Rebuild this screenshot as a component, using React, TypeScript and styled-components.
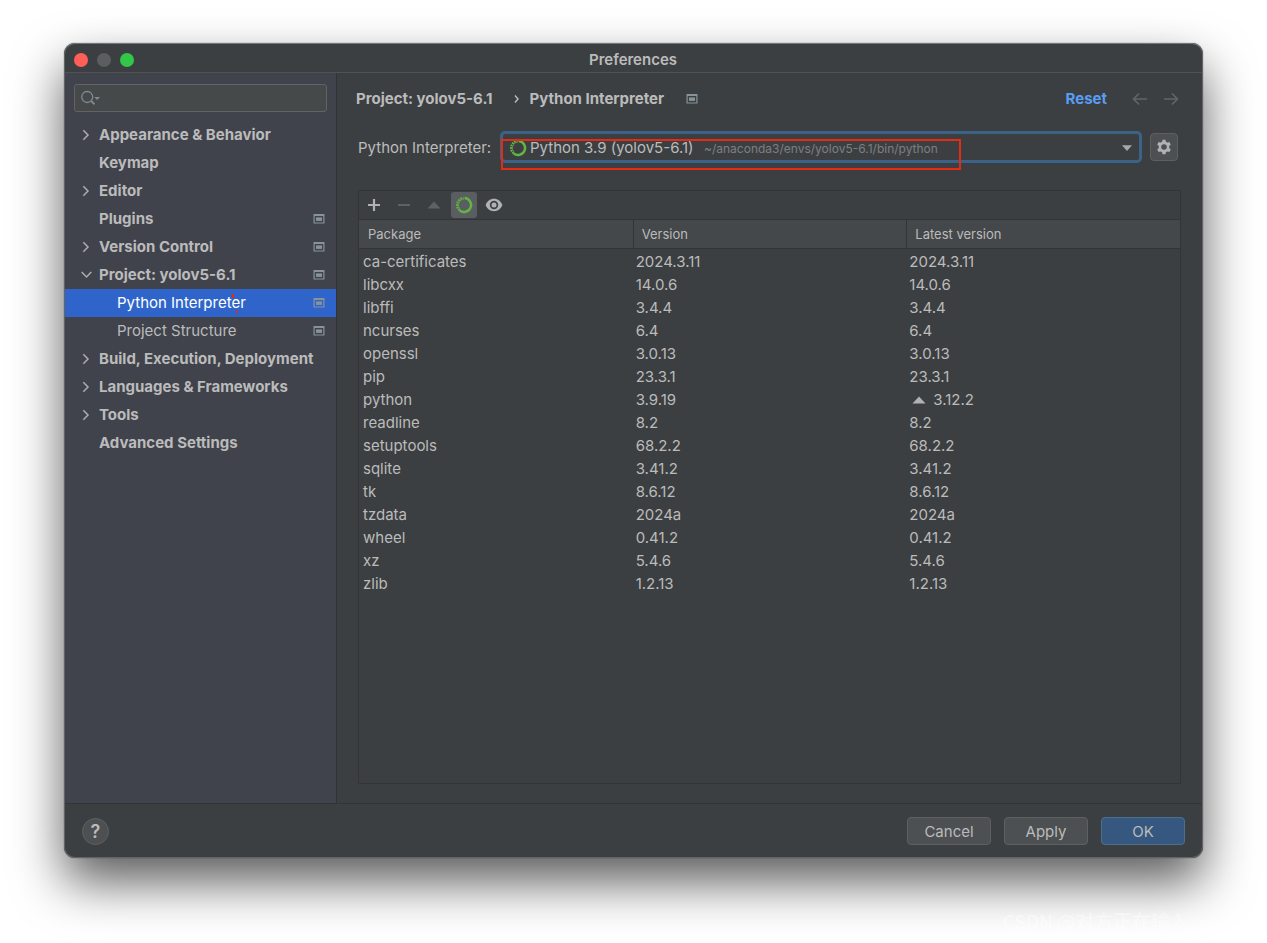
import React from "react";
import styled, { createGlobalStyle, css } from "styled-components";

const GlobalStyle = createGlobalStyle`
  * { box-sizing: border-box; }
  body {
    margin: 0;
    background: #ffffff;
    color: #bbbbbb;
    font-family: Inter, "Liberation Sans", sans-serif;
    font-optical-sizing: none;
    font-size: 15px;
    line-height: 20px;
  }
  button, input, select { font: inherit; color: inherit; }
`;

const Page = styled.div`
  position: relative;
  min-height: 100vh;
  padding: 43px 64px 85px 64px;
  display: flex;
  overflow: hidden;
`;

const Dialog = styled.div`
  flex: 1;
  min-width: 0;
  display: flex;
  flex-direction: column;
  background: #3c3f41;
  border: 1px solid #626465;
  border-top-color: #757777;
  border-radius: 11px;
  overflow: hidden;
  box-shadow: 0 0 1px 0 rgba(0, 0, 0, 0.8), 0 24px 50px 0 rgba(0, 0, 0, 0.64);
`;

const TitleBar = styled.header`
  display: grid;
  grid-template-columns: 1fr auto 1fr;
  align-items: center;
  height: 29px;
  padding: 4px 10px 0 9px;
  border-bottom: 1px solid #505354;
`;

const Lights = styled.div`
  display: flex;
  gap: 9px;
`;

const Light = styled.button<{ $color: string }>`
  width: 14px;
  height: 14px;
  padding: 0;
  border: 0;
  border-radius: 50%;
  background: ${(p) => p.$color};
`;

const Title = styled.h1`
  margin: 0;
  font-size: 15px;
  line-height: 20px;
  font-weight: 600;
`;

const Body = styled.div`
  flex: 1;
  display: flex;
  min-height: 0;
`;

const Sidebar = styled.aside`
  flex: none;
  width: 272px;
  background: #40434c;
  border-right: 1px solid #323335;
`;

const SearchBox = styled.label`
  display: flex;
  align-items: center;
  height: 28px;
  margin: 11px 9px 9px 9px;
  padding: 0 6px;
  background: #45494a;
  border: 1px solid #616365;
  border-radius: 3px;
`;

const SearchInput = styled.input`
  flex: 1;
  min-width: 0;
  border: 0;
  outline: 0;
  padding: 0 4px;
  background: transparent;
`;

const Tree = styled.ul`
  list-style: none;
  margin: 0;
  padding: 0;
`;

const TreeRow = styled.button<{ $child?: boolean; $selected?: boolean }>`
  display: flex;
  align-items: center;
  width: 100%;
  height: 28px;
  padding: 0 11px 0 ${(p) => (p.$child ? 34 : 16)}px;
  border: 0;
  background: transparent;
  text-align: left;
  white-space: nowrap;
  font-weight: ${(p) => (p.$child ? 400 : 700)};
  ${(p) =>
    p.$selected &&
    css`
      background: #2f65ca;
      color: #ffffff;
    `}
`;

const ArrowSlot = styled.span`
  display: flex;
  flex: none;
  width: 18px;
`;

const TreeText = styled.span`
  position: relative;
  flex: 1;
`;

const RedSpecks = styled.svg`
  position: absolute;
  top: 1px;
  left: 114px;
`;

const Main = styled.main`
  flex: 1;
  min-width: 0;
  display: flex;
  flex-direction: column;
  padding: 0 21px 19px 21px;
`;

const Crumbs = styled.div`
  display: flex;
  align-items: center;
  height: 52px;
  margin-left: -2px;
  font-weight: 700;
  white-space: nowrap;
`;

const CrumbArrow = styled.span`
  display: flex;
  margin: 0 10px 0 21px;
`;

const CrumbIcon = styled.span`
  display: flex;
  margin-left: 22px;
`;

const CrumbActions = styled.div`
  display: flex;
  align-items: center;
  gap: 15px;
  margin-left: auto;
  margin-right: 2px;
`;

const ResetLink = styled.a`
  margin-right: 10px;
  color: #589df6;
  text-decoration: none;
`;

const NavButton = styled.button`
  display: flex;
  padding: 0;
  border: 0;
  background: transparent;
`;

const FieldRow = styled.div`
  display: flex;
  align-items: center;
  height: 32px;
  margin: 6px 3px 27px 0;
`;

const FieldLabel = styled.label`
  flex: none;
  width: 142px;
  padding-top: 2px;
  white-space: nowrap;
`;

const Combo = styled.div`
  position: relative;
  flex: 1;
  min-width: 0;
  display: flex;
  align-items: center;
  height: 32px;
  padding: 1px 6px 0 6px;
  border: 3px solid #3d6288;
  border-radius: 5px;
  white-space: nowrap;
`;

const ComboSelect = styled.select`
  appearance: none;
  margin: 0 10px 0 3px;
  padding: 0;
  border: 0;
  outline: 0;
  background: transparent;
`;

const ComboPath = styled.span`
  flex: 1;
  padding-top: 2px;
  color: #7c7f80;
  font-size: 12px;
`;

const Highlight = styled.div`
  position: absolute;
  top: 5px;
  left: -2px;
  width: 460px;
  height: 31px;
  border: 2px solid #e62b14;
  pointer-events: none;
`;

const GearButton = styled.button`
  display: flex;
  align-items: center;
  justify-content: center;
  width: 28px;
  height: 28px;
  margin-left: 8px;
  padding: 0;
  background: #4c5052;
  border: 1px solid #5e6060;
  border-radius: 4px;
`;

const Packages = styled.section`
  flex: 1;
  border: 1px solid #323435;
`;

const Toolbar = styled.div`
  display: flex;
  align-items: center;
  gap: 4px;
  height: 28px;
  padding-left: 2px;
`;

const ToolButton = styled.button<{ $active?: boolean }>`
  display: flex;
  align-items: center;
  justify-content: center;
  width: 26px;
  height: 26px;
  padding: 0;
  border: 0;
  border-radius: 3px;
  background: ${(p) => (p.$active ? "#5a5e60" : "transparent")};
`;

const Table = styled.table`
  width: 100%;
  table-layout: fixed;
  border-collapse: separate;
  border-spacing: 0;
`;

const HeadCell = styled.th`
  height: 30px;
  padding: 0 0 0 9px;
  background: #45484a;
  border-top: 1px solid #323435;
  border-bottom: 1px solid #323435;
  font-size: 13px;
  font-weight: 400;
  text-align: left;
  & + & {
    border-left: 1px solid #323435;
    padding-left: 8px;
  }
`;

const Cell = styled.td`
  height: 23px;
  padding: 0 0 0 4px;
  line-height: 23px;
  & + & {
    padding-left: 3px;
  }
`;

const TableBody = styled.tbody`
  &::before {
    content: "";
    display: table-row;
    height: 1px;
  }
`;

const Upgrade = styled.span`
  display: flex;
  align-items: center;
  gap: 7px;
  padding-left: 3px;
`;

const Footer = styled.footer`
  display: flex;
  align-items: center;
  gap: 13px;
  height: 54px;
  padding: 1px 17px 0 17px;
  border-top: 1px solid #323435;
`;

const HelpButton = styled.button`
  width: 27px;
  height: 27px;
  margin-right: auto;
  padding: 1px 0 0 0;
  border: 1px solid #5e6060;
  border-radius: 50%;
  background: #4c5052;
  font-size: 18px;
  font-weight: 600;
`;

const PushButton = styled.button<{ $primary?: boolean }>`
  width: 84px;
  height: 28px;
  padding: 1px 0 0 0;
  border: 1px solid ${(p) => (p.$primary ? "#4c708c" : "#5e6060")};
  border-radius: 4px;
  background: ${(p) => (p.$primary ? "#365880" : "#4c5052")};
`;

const Watermark = styled.div`
  position: absolute;
  right: 78px;
  bottom: 10px;
  color: rgba(255, 255, 255, 0.5);
  font-family: "Noto Sans CJK SC", sans-serif;
  font-size: 19px;
  line-height: 24px;
  pointer-events: none;
`;

const SearchIcon = () => (
  <svg width="20" height="16" viewBox="0 0 20 16" fill="none" stroke="#7f8b91" strokeWidth="1.3">
    <circle cx="6.2" cy="7" r="5.5" />
    <path d="M10.2 11L13.5 14.3" strokeWidth="1.8" />
    <path d="M13.2 7H19L16.1 10Z" fill="#7f8b91" stroke="none" />
  </svg>
);

const ChevronRight = () => (
  <svg width="10" height="12" viewBox="0 0 10 12" fill="none" stroke="#adadad" strokeWidth="1.5">
    <path d="M2.3 1.3L7 6L2.3 10.7" />
  </svg>
);

const ChevronDown = () => (
  <svg width="12" height="12" viewBox="0 0 12 12" fill="none" stroke="#adadad" strokeWidth="1.5">
    <path d="M0.7 3L5.5 8L10.3 3" />
  </svg>
);

const ProjectIcon = () => (
  <svg width="12" height="10" viewBox="0 0 12 10" fill="#87939a">
    <path fillRule="evenodd" d="M0.5 0H11.5V9.5H0.5ZM1.7 2V8.4H10.3V2Z" />
    <rect x="3" y="3.4" width="6" height="3.5" />
  </svg>
);

const CondaIcon = () => (
  <svg width="18" height="18" viewBox="0 0 18 18" fill="none" stroke="#62b543">
    <path d="M9.6 2A7 7 0 1 1 4.6 14.4" strokeWidth="2.5" />
    <path d="M4.6 14.4A7 7 0 0 1 8.6 2" strokeWidth="2.1" strokeDasharray="1.7 0.9" />
    <path d="M5.2 13.4A6.1 6.1 0 0 1 8.8 3" strokeWidth="0.7" />
  </svg>
);

const GearIcon = () => (
  <svg width="16" height="16" viewBox="0 0 16 16" fill="#afb1b3">
    <path
      fillRule="evenodd"
      d="M6.5 0.7H9.5L9.9 2.8L11.3 3.6L13.3 2.9L14.8 5.5L13.2 6.9V9.1L14.8 10.5L13.3 13.1L11.3 12.4L9.9 13.2L9.5 15.3H6.5L6.1 13.2L4.7 12.4L2.7 13.1L1.2 10.5L2.8 9.1V6.9L1.2 5.5L2.7 2.9L4.7 3.6L6.1 2.8ZM8 5.2A2.8 2.8 0 1 0 8 10.8A2.8 2.8 0 1 0 8 5.2Z"
    />
  </svg>
);

const EyeIcon = () => (
  <svg width="18" height="14" viewBox="0 0 18 14">
    <path
      fill="#afb1b3"
      fillRule="evenodd"
      d="M9 0.8C13 0.8 16.1 3.4 17.4 7C16.1 10.6 13 13.2 9 13.2C5 13.2 1.9 10.6 0.6 7C1.9 3.4 5 0.8 9 0.8ZM9 2.8A4.2 4.2 0 1 0 9 11.2A4.2 4.2 0 1 0 9 2.8Z"
    />
    <circle cx="9" cy="7" r="2.5" fill="#afb1b3" />
  </svg>
);

const PlusIcon = () => (
  <svg width="14" height="14" viewBox="0 0 14 14" stroke="#afb1b3" strokeWidth="2.2">
    <path d="M7 1V13M1 7H13" />
  </svg>
);

const MinusIcon = () => (
  <svg width="14" height="14" viewBox="0 0 14 14" stroke="#5f6263" strokeWidth="2">
    <path d="M1 7H13" />
  </svg>
);

const Triangle = ({ color }: { color: string }) => (
  <svg width="14" height="8" viewBox="0 0 14 8" fill={color}>
    <path d="M0.5 7.5L7 0.5L13.5 7.5Z" />
  </svg>
);

const DropArrow = () => (
  <svg width="12" height="8" viewBox="0 0 12 8" fill="#a5a7a8">
    <path d="M1 1.2H11L6 7Z" />
  </svg>
);

const ArrowIcon = ({ back }: { back?: boolean }) => (
  <svg width="16" height="14" viewBox="0 0 16 14" fill="none" stroke="#626567" strokeWidth="1.6">
    <path d={back ? "M15 7H1.5M7 1.5L1.5 7L7 12.5" : "M1 7H14.5M9 1.5L14.5 7L9 12.5"} />
  </svg>
);

type Node = {
  label: string;
  arrow?: "right" | "down";
  project?: boolean;
  child?: boolean;
  selected?: boolean;
};

const nodes: Node[] = [
  { label: "Appearance & Behavior", arrow: "right" },
  { label: "Keymap" },
  { label: "Editor", arrow: "right" },
  { label: "Plugins", project: true },
  { label: "Version Control", arrow: "right", project: true },
  { label: "Project: yolov5-6.1", arrow: "down", project: true },
  { label: "Python Interpreter", child: true, project: true, selected: true },
  { label: "Project Structure", child: true, project: true },
  { label: "Build, Execution, Deployment", arrow: "right" },
  { label: "Languages & Frameworks", arrow: "right" },
  { label: "Tools", arrow: "right" },
  { label: "Advanced Settings" },
];

const packages: [string, string, string?][] = [
  ["ca-certificates", "2024.3.11"],
  ["libcxx", "14.0.6"],
  ["libffi", "3.4.4"],
  ["ncurses", "6.4"],
  ["openssl", "3.0.13"],
  ["pip", "23.3.1"],
  ["python", "3.9.19", "3.12.2"],
  ["readline", "8.2"],
  ["setuptools", "68.2.2"],
  ["sqlite", "3.41.2"],
  ["tk", "8.6.12"],
  ["tzdata", "2024a"],
  ["wheel", "0.41.2"],
  ["xz", "5.4.6"],
  ["zlib", "1.2.13"],
];

export default function App() {
  return (
    <Page>
      <GlobalStyle />
      <Dialog role="dialog" aria-labelledby="dialog-title">
        <TitleBar>
          <Lights>
            <Light $color="#ff5f57" aria-label="Close" />
            <Light $color="#5b5d5e" aria-label="Minimize" />
            <Light $color="#32c748" aria-label="Zoom" />
          </Lights>
          <Title id="dialog-title">Preferences</Title>
        </TitleBar>
        <Body>
          <Sidebar>
            <SearchBox>
              <SearchIcon />
              <SearchInput type="text" aria-label="Search settings" />
            </SearchBox>
            <Tree>
              {nodes.map((n) => (
                <li key={n.label}>
                  <TreeRow $child={n.child} $selected={n.selected}>
                    <ArrowSlot>
                      {n.arrow === "right" && <ChevronRight />}
                      {n.arrow === "down" && <ChevronDown />}
                    </ArrowSlot>
                    <TreeText>
                      {n.label}
                      {n.selected && (
                        <RedSpecks width="8" height="20" viewBox="0 0 8 20" fill="#e62b14">
                          <rect x="1" y="0" width="2" height="4" />
                          <circle cx="5.5" cy="17.5" r="1.2" />
                        </RedSpecks>
                      )}
                    </TreeText>
                    {n.project && <ProjectIcon />}
                  </TreeRow>
                </li>
              ))}
            </Tree>
          </Sidebar>
          <Main>
            <Crumbs>
              <span>Project: yolov5-6.1</span>
              <CrumbArrow>
                <svg width="6" height="10" viewBox="0 0 6 10" fill="none" stroke="#bbbbbb" strokeWidth="1.4">
                  <path d="M1 1.5L4 5L1 8.5" />
                </svg>
              </CrumbArrow>
              <span>Python Interpreter</span>
              <CrumbIcon>
                <ProjectIcon />
              </CrumbIcon>
              <CrumbActions>
                <ResetLink href="#reset">Reset</ResetLink>
                <NavButton aria-label="Back">
                  <ArrowIcon back />
                </NavButton>
                <NavButton aria-label="Forward">
                  <ArrowIcon />
                </NavButton>
              </CrumbActions>
            </Crumbs>
            <FieldRow>
              <FieldLabel htmlFor="interpreter">Python Interpreter:</FieldLabel>
              <Combo>
                <CondaIcon />
                <ComboSelect id="interpreter">
                  <option>Python 3.9 (yolov5-6.1)</option>
                </ComboSelect>
                <ComboPath>~/anaconda3/envs/yolov5-6.1/bin/python</ComboPath>
                <DropArrow />
                <Highlight />
              </Combo>
              <GearButton aria-label="Interpreter settings">
                <GearIcon />
              </GearButton>
            </FieldRow>
            <Packages>
              <Toolbar>
                <ToolButton aria-label="Install">
                  <PlusIcon />
                </ToolButton>
                <ToolButton aria-label="Uninstall">
                  <MinusIcon />
                </ToolButton>
                <ToolButton aria-label="Upgrade">
                  <Triangle color="#5f6263" />
                </ToolButton>
                <ToolButton $active aria-label="Use Conda package manager">
                  <CondaIcon />
                </ToolButton>
                <ToolButton aria-label="Show early releases">
                  <EyeIcon />
                </ToolButton>
              </Toolbar>
              <Table>
                <thead>
                  <tr>
                    <HeadCell>Package</HeadCell>
                    <HeadCell>Version</HeadCell>
                    <HeadCell>Latest version</HeadCell>
                  </tr>
                </thead>
                <TableBody>
                  {packages.map(([name, version, latest]) => (
                    <tr key={name}>
                      <Cell>{name}</Cell>
                      <Cell>{version}</Cell>
                      <Cell>
                        {latest ? (
                          <Upgrade>
                            <Triangle color="#afb1b3" />
                            {latest}
                          </Upgrade>
                        ) : (
                          version
                        )}
                      </Cell>
                    </tr>
                  ))}
                </TableBody>
              </Table>
            </Packages>
          </Main>
        </Body>
        <Footer>
          <HelpButton aria-label="Help">?</HelpButton>
          <PushButton>Cancel</PushButton>
          <PushButton>Apply</PushButton>
          <PushButton $primary>OK</PushButton>
        </Footer>
      </Dialog>
      <Watermark>CSDN @对方正在输入</Watermark>
    </Page>
  );
}
